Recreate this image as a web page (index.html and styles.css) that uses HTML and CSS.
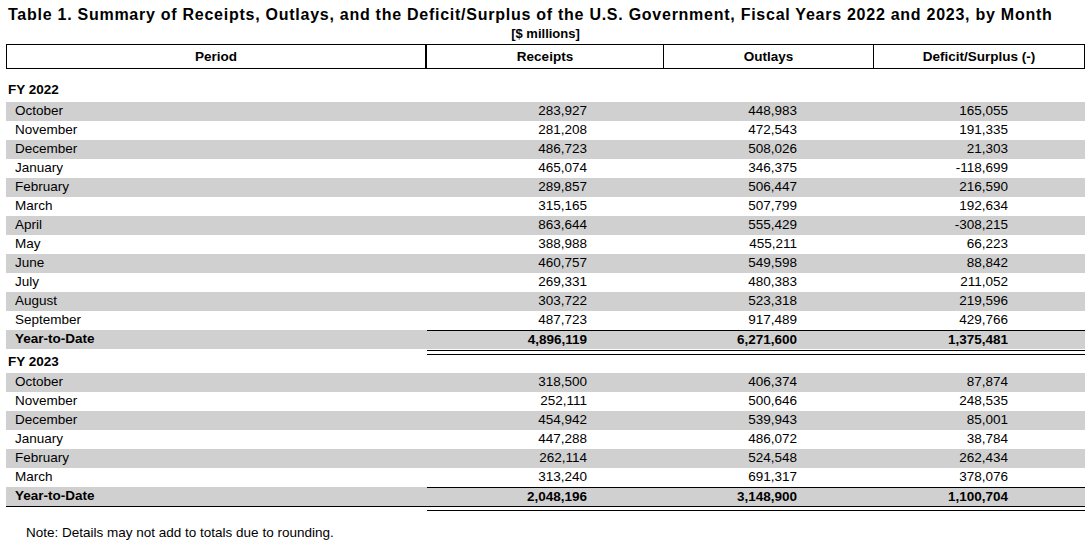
FILE: index.html
```html
<!DOCTYPE html>
<html lang="en">
<head>
<meta charset="utf-8">
<title>Table 1</title>
<link rel="stylesheet" href="styles.css">
</head>
<body>
<div class="page">
  <h1 class="title">Table 1. Summary of Receipts, Outlays, and the Deficit/Surplus of the U.S. Government, Fiscal Years 2022 and 2023, by Month</h1>
  <div class="tbl">
    <div class="sub">[$ millions]</div>
    <div class="head">
      <div class="c lab">Period</div>
      <div class="c n1">Receipts</div>
      <div class="c n2">Outlays</div>
      <div class="c n3">Deficit/Surplus (-)</div>
    </div>
    <div class="spacer"></div>

    <div class="fy">FY 2022</div>
    <div class="row g"><div class="lab">October</div><div class="n1">283,927</div><div class="n2">448,983</div><div class="n3">165,055</div></div>
    <div class="row"><div class="lab">November</div><div class="n1">281,208</div><div class="n2">472,543</div><div class="n3">191,335</div></div>
    <div class="row g"><div class="lab">December</div><div class="n1">486,723</div><div class="n2">508,026</div><div class="n3">21,303</div></div>
    <div class="row"><div class="lab">January</div><div class="n1">465,074</div><div class="n2">346,375</div><div class="n3">-118,699</div></div>
    <div class="row g"><div class="lab">February</div><div class="n1">289,857</div><div class="n2">506,447</div><div class="n3">216,590</div></div>
    <div class="row"><div class="lab">March</div><div class="n1">315,165</div><div class="n2">507,799</div><div class="n3">192,634</div></div>
    <div class="row g"><div class="lab">April</div><div class="n1">863,644</div><div class="n2">555,429</div><div class="n3">-308,215</div></div>
    <div class="row"><div class="lab">May</div><div class="n1">388,988</div><div class="n2">455,211</div><div class="n3">66,223</div></div>
    <div class="row g"><div class="lab">June</div><div class="n1">460,757</div><div class="n2">549,598</div><div class="n3">88,842</div></div>
    <div class="row"><div class="lab">July</div><div class="n1">269,331</div><div class="n2">480,383</div><div class="n3">211,052</div></div>
    <div class="row g"><div class="lab">August</div><div class="n1">303,722</div><div class="n2">523,318</div><div class="n3">219,596</div></div>
    <div class="row"><div class="lab">September</div><div class="n1">487,723</div><div class="n2">917,489</div><div class="n3">429,766</div></div>
    <div class="row g total"><div class="lab">Year-to-Date</div><div class="nums"><div class="n1">4,896,119</div><div class="n2">6,271,600</div><div class="n3">1,375,481</div></div></div>
    <div class="dbl"></div>

    <div class="fy fy2">FY 2023</div>
    <div class="row g"><div class="lab">October</div><div class="n1">318,500</div><div class="n2">406,374</div><div class="n3">87,874</div></div>
    <div class="row"><div class="lab">November</div><div class="n1">252,111</div><div class="n2">500,646</div><div class="n3">248,535</div></div>
    <div class="row g"><div class="lab">December</div><div class="n1">454,942</div><div class="n2">539,943</div><div class="n3">85,001</div></div>
    <div class="row"><div class="lab">January</div><div class="n1">447,288</div><div class="n2">486,072</div><div class="n3">38,784</div></div>
    <div class="row g"><div class="lab">February</div><div class="n1">262,114</div><div class="n2">524,548</div><div class="n3">262,434</div></div>
    <div class="row"><div class="lab">March</div><div class="n1">313,240</div><div class="n2">691,317</div><div class="n3">378,076</div></div>
    <div class="row g total last"><div class="lab">Year-to-Date</div><div class="nums"><div class="n1">2,048,196</div><div class="n2">3,148,900</div><div class="n3">1,100,704</div></div></div>
    <div class="dbl2"></div>
  </div>
  <p class="note">Note: Details may not add to totals due to rounding.</p>
</div>
</body>
</html>
```

FILE: styles.css
```css
* { box-sizing: border-box; }
html, body { margin: 0; padding: 0; background: #fff; }
body {
  font-family: "Liberation Sans", Arial, sans-serif;
  color: #000;
  font-size: 13.5px;
}
.page { padding-top: 6px; }
.title {
  margin: 0 0 0 8px;
  font-size: 16px;
  line-height: 18px;
  font-weight: bold;
  letter-spacing: 0.74px;
  white-space: nowrap;
}
.tbl { width: 1079px; margin-left: 6px; }
.sub {
  text-align: center;
  font-weight: bold;
  font-size: 13px;
  line-height: 16px;
  margin-top: 2px;
  height: 18px;
}
.head {
  display: flex;
  height: 25px;
  border: 1px solid #000;
  font-weight: bold;
  font-size: 13.5px;
}
.head .c {
  display: flex;
  align-items: center;
  justify-content: center;
}
.head .lab { width: 420px; border-right: 2px solid #000; }
.head .n1 { width: 237px; border-right: 1px solid #000; }
.head .n2 { width: 210px; border-right: 1px solid #000; }
.head .n3 { flex: 1; }
.spacer { height: 14px; }
.fy {
  font-weight: bold;
  font-size: 13.5px;
  line-height: 14px;
  height: 19px;
  padding-left: 2px;
}
.fy2 { line-height: 13px; height: 18px; }
.row {
  display: flex;
  height: 19px;
  line-height: 18px;
}
.row.g { background: #d0d0d0; }
.row .lab { width: 421px; padding-left: 9px; }
.row .n1, .row .n2, .row .n3 { text-align: right; padding-right: 77px; }
.row .n1 { width: 237px; }
.row .n2 { width: 210px; }
.row .n3 { width: 211px; }
.total { font-weight: bold; }
.total .nums {
  display: flex;
  border-top: 1px solid #000;
  line-height: 17px;
}
.last { border-bottom: 1px solid #000; height: 20px; }
.dbl {
  margin: 1px 0 0 421px;
  height: 5px;
  border-top: 1px solid #000;
  border-bottom: 1px solid #000;
}
.dbl2 {
  margin: 3px 0 0 421px;
  border-top: 1px solid #000;
  height: 1px;
}
.note {
  margin: 14px 0 0 26px;
  font-size: 13.5px;
  line-height: 16px;
}
```
